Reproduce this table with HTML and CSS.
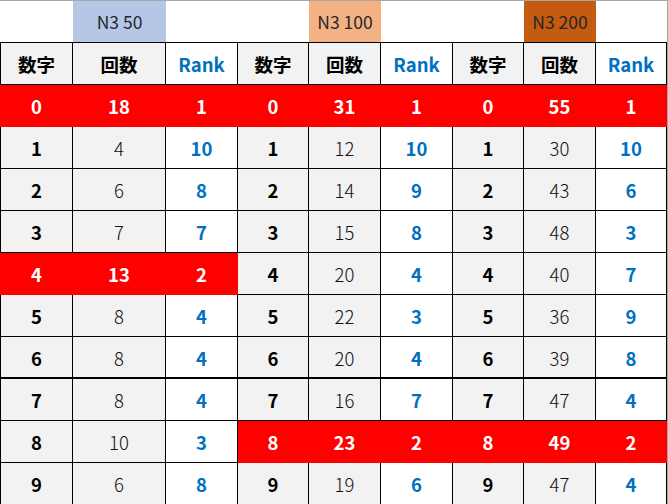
FILE: index.html
```html
<!DOCTYPE html>
<html lang="ja">
<head>
<meta charset="utf-8">
<link rel="stylesheet" href="styles.css">
</head>
<body>
<div class="sheet">
  <div class="row labels">
    <div class="lab"></div>
    <div class="lab l50">N3 50</div>
    <div class="lab"></div>
    <div class="lab"></div>
    <div class="lab l100">N3 100</div>
    <div class="lab"></div>
    <div class="lab"></div>
    <div class="lab l200">N3 200</div>
    <div class="lab"></div>
  </div>
  <div class="table">
    <div class="row">
      <div class="c num first">数字</div><div class="c num">回数</div><div class="c rank">Rank</div>
      <div class="c num">数字</div><div class="c num">回数</div><div class="c rank">Rank</div>
      <div class="c num">数字</div><div class="c num">回数</div><div class="c rank">Rank</div>
    </div>
    <div class="row">
      <div class="c hit first">0</div><div class="c hit">18</div><div class="c hit">1</div>
      <div class="c hit">0</div><div class="c hit">31</div><div class="c hit">1</div>
      <div class="c hit">0</div><div class="c hit">55</div><div class="c hit">1</div>
    </div>
    <div class="row">
      <div class="c num first">1</div><div class="c cnt">4</div><div class="c rank">10</div>
      <div class="c num">1</div><div class="c cnt">12</div><div class="c rank">10</div>
      <div class="c num">1</div><div class="c cnt">30</div><div class="c rank">10</div>
    </div>
    <div class="row">
      <div class="c num first">2</div><div class="c cnt">6</div><div class="c rank">8</div>
      <div class="c num">2</div><div class="c cnt">14</div><div class="c rank">9</div>
      <div class="c num">2</div><div class="c cnt">43</div><div class="c rank">6</div>
    </div>
    <div class="row">
      <div class="c num first">3</div><div class="c cnt">7</div><div class="c rank">7</div>
      <div class="c num">3</div><div class="c cnt">15</div><div class="c rank">8</div>
      <div class="c num">3</div><div class="c cnt">48</div><div class="c rank">3</div>
    </div>
    <div class="row">
      <div class="c hit first">4</div><div class="c hit">13</div><div class="c hit">2</div>
      <div class="c num">4</div><div class="c cnt">20</div><div class="c rank">4</div>
      <div class="c num">4</div><div class="c cnt">40</div><div class="c rank">7</div>
    </div>
    <div class="row">
      <div class="c num first">5</div><div class="c cnt">8</div><div class="c rank">4</div>
      <div class="c num">5</div><div class="c cnt">22</div><div class="c rank">3</div>
      <div class="c num">5</div><div class="c cnt">36</div><div class="c rank">9</div>
    </div>
    <div class="row thick">
      <div class="c num first">6</div><div class="c cnt">8</div><div class="c rank">4</div>
      <div class="c num">6</div><div class="c cnt">20</div><div class="c rank">4</div>
      <div class="c num">6</div><div class="c cnt">39</div><div class="c rank">8</div>
    </div>
    <div class="row">
      <div class="c num first">7</div><div class="c cnt">8</div><div class="c rank">4</div>
      <div class="c num">7</div><div class="c cnt">16</div><div class="c rank">7</div>
      <div class="c num">7</div><div class="c cnt">47</div><div class="c rank">4</div>
    </div>
    <div class="row">
      <div class="c num first">8</div><div class="c cnt">10</div><div class="c rank">3</div>
      <div class="c hit">8</div><div class="c hit">23</div><div class="c hit">2</div>
      <div class="c hit">8</div><div class="c hit">49</div><div class="c hit">2</div>
    </div>
    <div class="row">
      <div class="c num first">9</div><div class="c cnt">6</div><div class="c rank">8</div>
      <div class="c num">9</div><div class="c cnt">19</div><div class="c rank">6</div>
      <div class="c num">9</div><div class="c cnt">47</div><div class="c rank">4</div>
    </div>
  </div>
</div>
</body>
</html>
```

FILE: styles.css
```css
html, body {
  margin: 0;
  padding: 0;
  background: #ffffff;
}
.sheet {
  width: 668px;
  height: 504px;
  box-sizing: border-box;
  border-top: 1px solid #a6a6a6;
  border-right: 1px solid #a6a6a6;
  overflow: hidden;
  font-family: "Noto Sans CJK JP", "Noto Sans", sans-serif;
}
.row {
  display: grid;
  grid-template-columns: 73px 93px 72px 71px 72px 72px 71px 72px 71px;
}
.labels {
  height: 41px;
}
.lab {
  display: flex;
  align-items: center;
  justify-content: center;
  font-size: 17.5px;
  color: #262626;
}
.l50 { background: #b4c7e7; }
.l100 { background: #f4b183; }
.l200 { background: #c55a11; }
.table {
  border-top: 1px solid #000;
}
.c {
  box-sizing: border-box;
  height: 42px;
  display: flex;
  align-items: center;
  justify-content: center;
  border-right: 1px solid #000;
  border-bottom: 1px solid #000;
  font-size: 18.5px;
  font-weight: 700;
  padding-top: 1px;
}
.thick .c {
  border-bottom-width: 2px;
}
.first {
  border-left: 1px solid #000;
}
.num {
  background: #f2f2f2;
  color: #000;
}
.cnt {
  background: #f2f2f2;
  color: #111;
  font-weight: 300;
}
.rank {
  background: #fff;
  color: #0070c0;
}
.hit {
  background: #ff0000;
  color: #fff;
  border-color: #ff0000;
}
```
